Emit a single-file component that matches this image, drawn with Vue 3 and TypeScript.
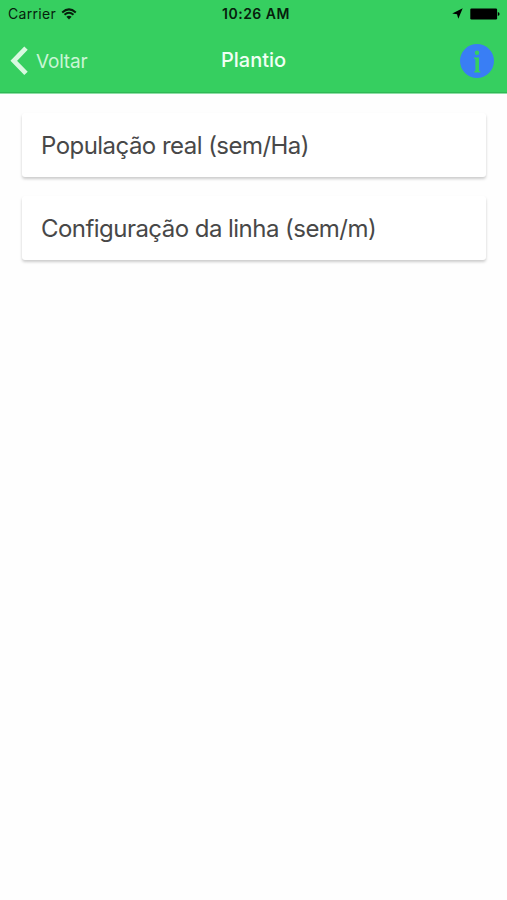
<script setup lang="ts">
interface MenuItem {
  id: string
  label: string
}

const items: MenuItem[] = [
  { id: 'population', label: 'População real (sem/Ha)' },
  { id: 'row', label: 'Configuração da linha (sem/m)' },
]
</script>

<template>
  <div class="screen">
    <header class="header">
      <div class="status">
        <div class="carrier">
          <span>Carrier</span>
          <svg class="wifi" width="16" height="12" viewBox="0 0 16 12">
            <path d="M1.2 4.4Q8 -1.6 14.8 4.4" />
            <path d="M3.5 6.8Q8 2.8 12.5 6.8" />
            <path class="dot" d="M5.4 8.8Q8 6.6 10.6 8.8L8 11.5Z" />
          </svg>
        </div>
        <span class="time">10:26 AM</span>
        <div class="indicators">
          <svg width="11" height="11" viewBox="0 0 11 11">
            <path d="M10.7 0.3L6.3 10.7L5 6.2L0.2 5.4Z" />
          </svg>
          <svg width="30" height="12" viewBox="0 0 30 12">
            <rect x="0.3" y="0.5" width="26.8" height="11" rx="1.2" />
            <path d="M27.8 4Q29.6 4.3 29.6 6T27.8 8Z" />
          </svg>
        </div>
      </div>
      <nav class="nav">
        <button class="back" type="button">
          <svg width="18" height="30" viewBox="0 0 18 30">
            <path d="M16 2.2L3.8 14.8L16 27.4" />
          </svg>
          <span>Voltar</span>
        </button>
        <h1 class="title">Plantio</h1>
        <button class="info" type="button" aria-label="Info">
          <svg width="34" height="34" viewBox="0 0 34 34">
            <circle class="disc" cx="17" cy="17" r="17" />
            <circle class="mark" cx="17" cy="8.8" r="2.2" />
            <path class="mark" d="M14 13.6H19V26.8L20.4 27.4V28.4H14.2V27.4L15.4 26.8V15.2L14 14.8Z" />
          </svg>
        </button>
      </nav>
    </header>
    <main class="list">
      <button v-for="item in items" :key="item.id" class="card" type="button">
        {{ item.label }}
      </button>
    </main>
  </div>
</template>

<style>
body {
  background: #fff;
}
</style>

<style scoped>
.screen {
  min-height: 900px;
  box-sizing: border-box;
  background: #fefefe;
  font-family: Inter, Roboto, sans-serif;
}
button {
  font: inherit;
  border: 0;
  padding: 0;
  background: none;
}
.header {
  height: 94px;
  box-sizing: border-box;
  background: #36cf60;
  border-bottom: 1px solid #8fdfa6;
  box-shadow: inset 0 -1px #2fb855;
}
.status {
  display: grid;
  grid-template-columns: 1fr auto 1fr;
  align-items: center;
  height: 27px;
  padding: 0 7px 0 8px;
  font-size: 14px;
  color: #06200c;
}
.carrier {
  display: flex;
  align-items: center;
  gap: 5px;
  letter-spacing: 0.3px;
}
.wifi path {
  fill: none;
  stroke: #06200c;
  stroke-width: 2;
}
.wifi .dot {
  fill: #06200c;
  stroke: none;
}
.time {
  font-weight: 600;
  padding-left: 4px;
  letter-spacing: 0.5px;
}
.indicators {
  display: flex;
  align-items: center;
  justify-content: flex-end;
  gap: 7px;
}
.nav {
  display: grid;
  grid-template-columns: 1fr auto 1fr;
  align-items: center;
  height: 66px;
  padding: 1px 13px 0 10px;
  box-sizing: border-box;
}
.back {
  display: flex;
  align-items: center;
  gap: 8px;
  color: #c9f6d5;
  font-size: 19px;
  letter-spacing: -0.2px;
}
.back span {
  padding-top: 2px;
}
.back path {
  fill: none;
  stroke: #d8f9e0;
  stroke-width: 4.8;
}
.title {
  margin: 0;
  padding: 0 0 2px 3px;
  font-size: 20px;
  font-weight: 500;
  color: #f0fff4;
}
.info {
  justify-self: end;
  height: 34px;
  margin-right: 0.5px;
}
.info svg {
  display: block;
}
.disc {
  fill: #397ef5;
}
.mark {
  fill: #36cf60;
}
.list {
  display: flex;
  flex-direction: column;
  gap: 19px;
  padding: 19px 21px 0 22px;
}
.card {
  display: flex;
  align-items: center;
  height: 64px;
  padding: 0 19px;
  border-radius: 3px;
  background: #fff;
  box-shadow: 0 2px 3px rgba(0, 0, 0, 0.2);
  color: #484848;
  font-size: 24px;
  letter-spacing: -0.54px;
  white-space: nowrap;
}
</style>
